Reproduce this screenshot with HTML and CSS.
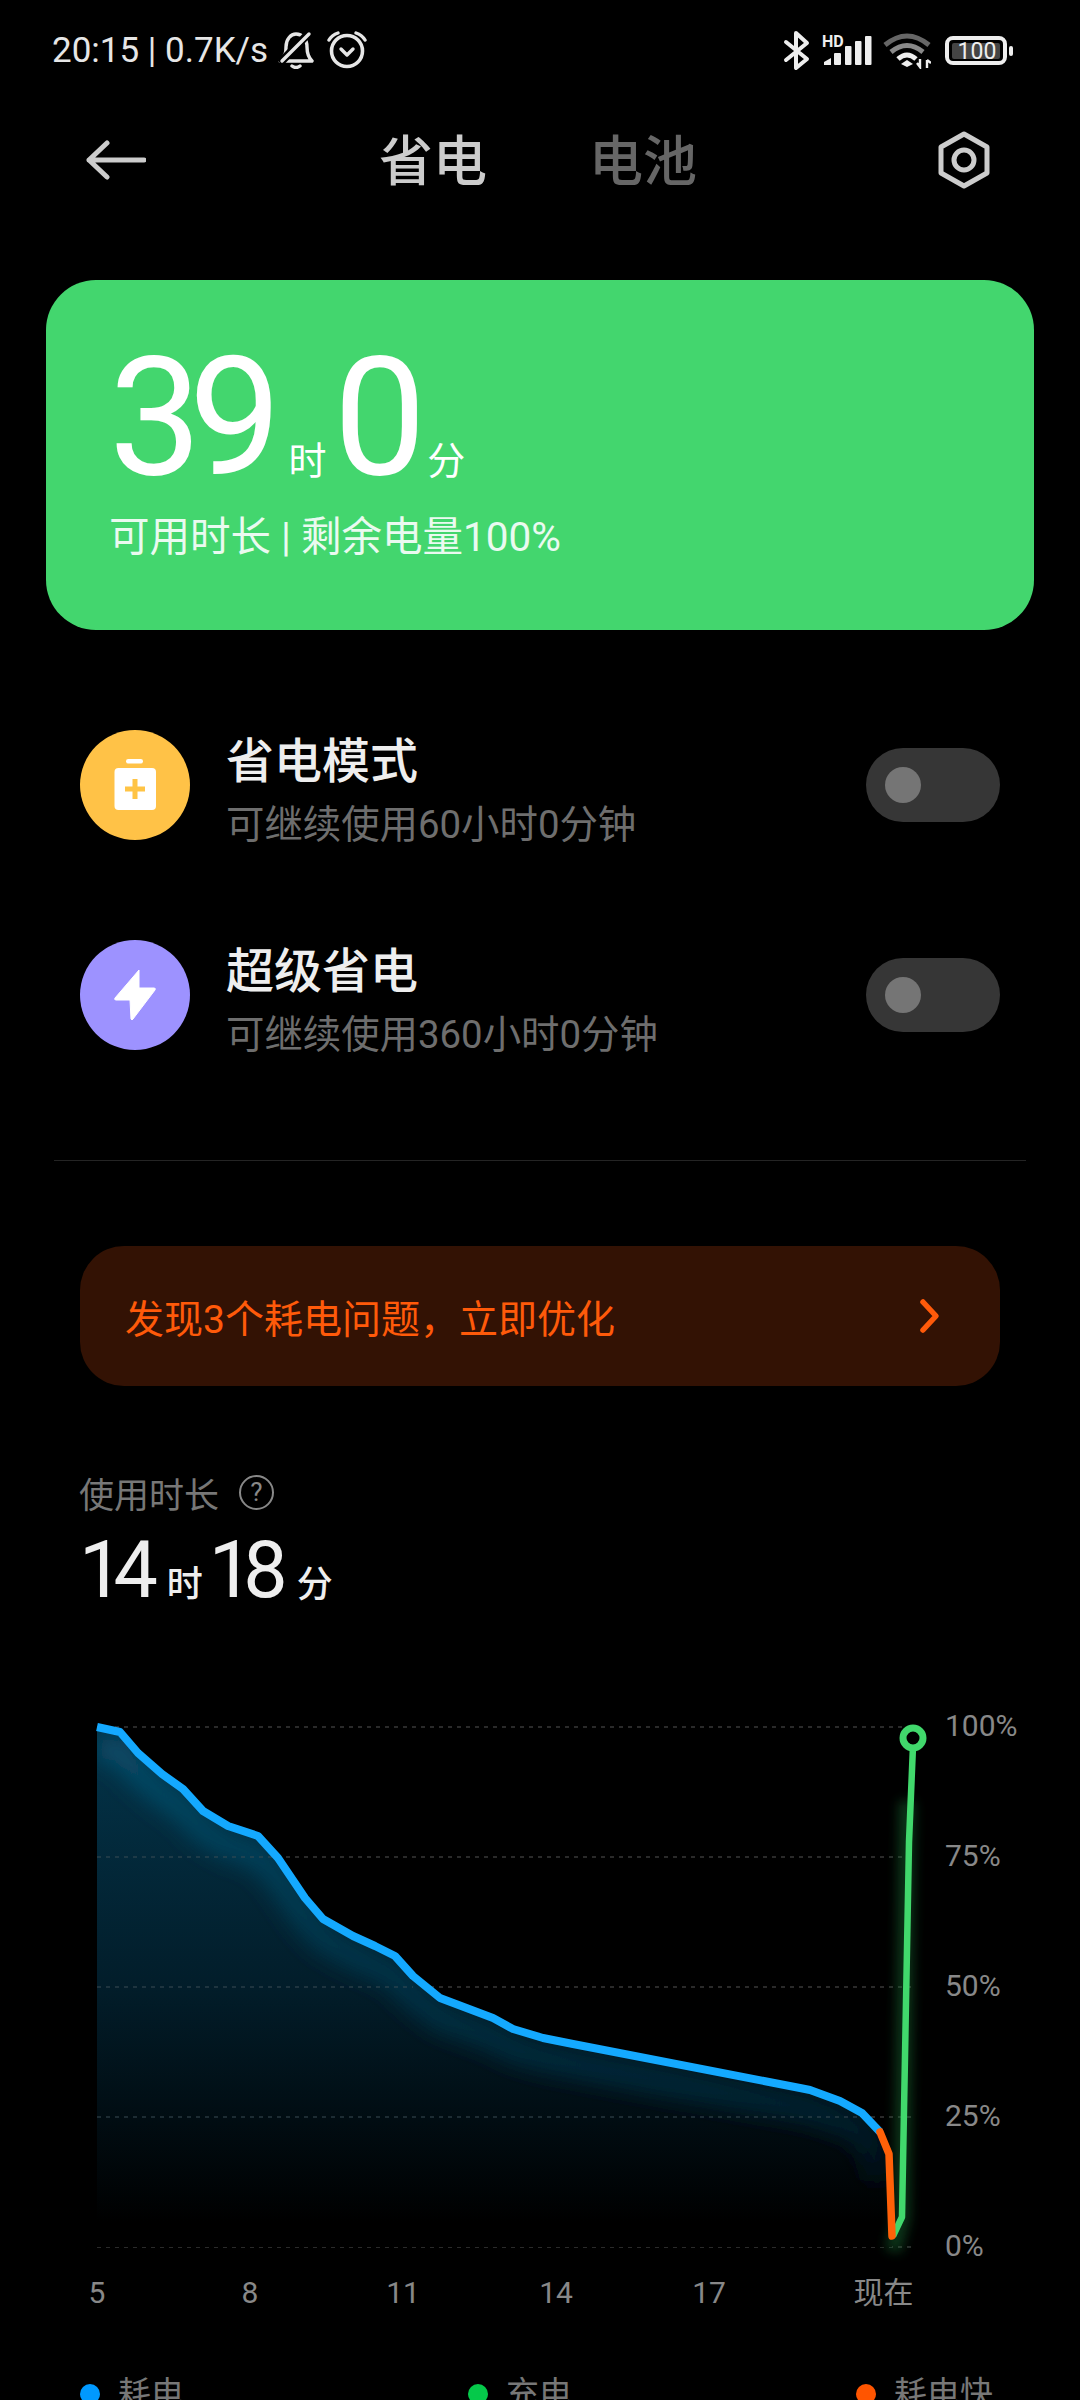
FILE: index.html
```html
<!DOCTYPE html>
<html lang="zh-CN">
<head>
    <meta charset="UTF-8">
    <title>省电与电池</title>
    <link rel="stylesheet" href="styles.css">
</head>
<body>
    <div class="status-bar">
        <div class="status-left">
            <span class="status-text">20:15 | 0.7K/s</span>
            <svg class="ic-bell" viewBox="277 30 36 38">
                <path d="M279 60 C285 55 285 50 285 46 C285 38 290 33 295 33 C301 33 306 38 306 46 C306 51 307 56 311 60 Z" fill="none" stroke="#e6e6e6" stroke-width="3.4" stroke-linejoin="round"/>
                <path d="M291 65 Q295 68 299 65" fill="none" stroke="#e6e6e6" stroke-width="3.4" stroke-linecap="round"/>
                <path d="M279 62 L309 31" stroke="#000" stroke-width="8"/>
                <path d="M281 60 L308 33" stroke="#e6e6e6" stroke-width="3.4" stroke-linecap="round"/>
            </svg>
            <svg class="ic-alarm" viewBox="325 30 40 38">
                <circle cx="345" cy="50" r="15.5" fill="none" stroke="#e6e6e6" stroke-width="3.6"/>
                <path d="M339 48 L345 54 L351 48" fill="none" stroke="#e6e6e6" stroke-width="3.4" stroke-linecap="round" stroke-linejoin="round"/>
                <path d="M327 39 Q330 34 336 32 M354 32 Q360 34 363 39" fill="none" stroke="#e6e6e6" stroke-width="3.4" stroke-linecap="round"/>
            </svg>
        </div>
        <div class="status-right">
            <svg class="ic-bt" viewBox="784 28 28 41">
                <path d="M787 40 L808 57 L797 66 V31 L808 41 L787 58" fill="none" stroke="#eee" stroke-width="4" stroke-linecap="round" stroke-linejoin="round"/>
            </svg>
            <svg class="ic-signal" viewBox="822 32 52 34">
                <text class="hd" x="823" y="46">HD</text>
                <path d="M825 64 V61 L832 57 V64 Z" fill="#eee"/>
                <rect x="835" y="52" width="7" height="12" rx="1" fill="#eee"/>
                <rect x="846" y="45" width="6.5" height="19" rx="1" fill="#eee"/>
                <rect x="856" y="40" width="6.5" height="24" rx="1" fill="#eee"/>
                <rect x="866" y="35" width="6.5" height="29" rx="1" fill="#eee"/>
            </svg>
            <svg class="ic-wifi" viewBox="884 30 48 38">
                <path d="M886 44 Q908 26 930 44" fill="none" stroke="#666" stroke-width="5"/>
                <path d="M892 51 Q908 38 924 51" fill="none" stroke="#888" stroke-width="5"/>
                <path d="M899 58 Q908 50 917 58" fill="none" stroke="#eee" stroke-width="5"/>
                <path d="M902 63 L908 59 L914 63 L908 66 Z" fill="#eee"/>
                <path d="M921 58 V66 M918 62 L921 66 L921 62 M928 67 V59 M928 59 L932 62" fill="none" stroke="#eee" stroke-width="2.4"/>
            </svg>
            <svg class="ic-batt" viewBox="945 32 71 33">
                <rect x="948" y="36" width="58" height="25" rx="6" fill="none" stroke="#eee" stroke-width="4"/>
                <rect x="953" y="41" width="48" height="16" rx="2" fill="#444"/>
                <text class="batt-num" x="978" y="57" text-anchor="middle">100</text>
                <rect x="1010" y="44" width="4" height="10" rx="2" fill="#eee"/>
            </svg>
        </div>
    </div>

    <div class="header">
        <svg class="ic-back" viewBox="86 140 62 40">
            <path d="M146 160 H91 M109 143 L91 160 L109 177" fill="none" stroke="#ccc" stroke-width="5" stroke-linecap="round" stroke-linejoin="round"/>
        </svg>
        <div class="tabs">
            <span class="tab active">省电</span>
            <span class="tab">电池</span>
        </div>
        <svg class="ic-gear" viewBox="936 130 56 60">
            <path d="M964 134 L987 147 V173 L964 186 L941 173 V147 Z" fill="none" stroke="#ccc" stroke-width="5" stroke-linejoin="round"/>
            <circle cx="964" cy="160" r="10" fill="none" stroke="#ccc" stroke-width="5"/>
        </svg>
    </div>

    <div class="card">
        <div class="hero">
            <span class="hero-num">39</span><span class="hero-unit">时</span><span class="hero-num">0</span><span class="hero-unit min">分</span>
        </div>
        <div class="hero-sub">可用时长 | 剩余电量100%</div>
    </div>

    <div class="modes">
        <div class="mode">
            <div class="mode-icon yellow">
                <svg viewBox="110 755 50 60" class="ic-mode">
                    <rect x="126" y="759" width="17" height="4.5" rx="2.2" fill="#fff"/>
                    <rect x="114.5" y="768" width="41.5" height="42" rx="4" fill="#fff"/>
                    <path d="M135 779 V799 M125 789 H145" stroke="#ffc445" stroke-width="5"/>
                </svg>
            </div>
            <div class="mode-text">
                <div class="mode-title">省电模式</div>
                <div class="mode-sub">可继续使用60小时0分钟</div>
            </div>
            <div class="toggle"><div class="knob"></div></div>
        </div>
        <div class="mode">
            <div class="mode-icon purple">
                <svg viewBox="110 965 50 60" class="ic-mode">
                    <path d="M139 970 L115 998 Q114 1000 116 1000 L130 1000 L131 1019 Q132 1021 133 1019 L155 990 Q156 988 154 988 L139 988 Z" fill="#fff" stroke="#fff" stroke-width="1" stroke-linejoin="round"/>
                </svg>
            </div>
            <div class="mode-text">
                <div class="mode-title">超级省电</div>
                <div class="mode-sub">可继续使用360小时0分钟</div>
            </div>
            <div class="toggle"><div class="knob"></div></div>
        </div>
    </div>

    <div class="divider"></div>

    <div class="banner">
        <span>发现3个耗电问题，立即优化</span>
        <svg class="ic-chev" viewBox="918 1298 24 38">
            <path d="M923 1303 L936 1317 L923 1331" fill="none" stroke="#ff5a0a" stroke-width="5.5" stroke-linecap="round" stroke-linejoin="round"/>
        </svg>
    </div>

    <div class="usage">
        <div class="usage-label">
            <span>使用时长</span>
            <span class="help">?</span>
        </div>
        <div class="usage-time">
            <span class="usage-num">14</span><span class="usage-unit">时</span><span class="usage-num">18</span><span class="usage-unit">分</span>
        </div>
    </div>

    <div class="chart">
        <div class="plot">
            <svg class="plot-svg" viewBox="90 1658 840 612">
                <defs>
                    <linearGradient id="areaFill" x1="0" y1="1726" x2="0" y2="2246" gradientUnits="userSpaceOnUse">
                        <stop offset="0" stop-color="#03344a"/>
                        <stop offset="0.5" stop-color="#021d2a"/>
                        <stop offset="0.95" stop-color="#000"/>
                    </linearGradient>
                    <linearGradient id="glowFade" x1="0" y1="1726" x2="0" y2="2246" gradientUnits="userSpaceOnUse">
                        <stop offset="0" stop-color="#07506e"/>
                        <stop offset="0.7" stop-color="#05293a"/>
                        <stop offset="1" stop-color="#000"/>
                    </linearGradient>
                    <clipPath id="areaClip">
                        <path d="M97 1726 L120 1731 L138 1752 L162 1773 L183 1788 L203 1810 L228 1825 L258 1835 L278 1857 L305 1897 L323 1918 L353 1935 L375 1945 L395 1955 L413 1975 L440 1997 L493 2017 L513 2028 L543 2037 L573 2043 L800 2087 L810 2089 L840 2100 L862 2112 L880 2131 L889 2153 L892 2235 L892 2246 L97 2246 Z"/>
                    </clipPath>
                    <filter id="blur12" x="-10%" y="-10%" width="120%" height="120%"><feGaussianBlur stdDeviation="11"/></filter>
                    <filter id="blur6" x="-400%" y="-10%" width="900%" height="120%"><feGaussianBlur stdDeviation="6"/></filter>
                </defs>

                <path class="grid" d="M97 1726 H913 M97 1856 H913 M97 1986 H913 M97 2116 H913 M97 2246 H913"/>

                <path d="M97 1726 L120 1731 L138 1752 L162 1773 L183 1788 L203 1810 L228 1825 L258 1835 L278 1857 L305 1897 L323 1918 L353 1935 L375 1945 L395 1955 L413 1975 L440 1997 L493 2017 L513 2028 L543 2037 L573 2043 L800 2087 L810 2089 L840 2100 L862 2112 L880 2131 L889 2153 L892 2235 L892 2246 L97 2246 Z" fill="url(#areaFill)"/>
                <g clip-path="url(#areaClip)">
                    <path d="M97 1746 L120 1751 L138 1772 L162 1793 L183 1808 L203 1830 L228 1845 L258 1855 L278 1877 L305 1917 L323 1938 L353 1955 L375 1965 L395 1975 L413 1995 L440 2017 L493 2037 L513 2048 L543 2057 L573 2063 L800 2107 L810 2109 L840 2120 L862 2132 L872 2150 L880 2180" fill="none" stroke="url(#glowFade)" stroke-width="24" filter="url(#blur12)"/>
                </g>
                <path class="grid over" d="M97 1856 H278 M97 1986 H413 M97 2116 H862"/>

                <path d="M907 1800 L902 2216 L893 2250" fill="none" stroke="#1a7a3a" stroke-width="16" filter="url(#blur6)" opacity="0.45"/>

                <path d="M97 1726 L120 1731 L138 1752 L162 1773 L183 1788 L203 1810 L228 1825 L258 1835 L278 1857 L305 1897 L323 1918 L353 1935 L375 1945 L395 1955 L413 1975 L440 1997 L493 2017 L513 2028 L543 2037 L573 2043 L800 2087 L810 2089 L840 2100 L862 2112 L880 2131" fill="none" stroke="#14a9ff" stroke-width="8" stroke-linejoin="round"/>
                <path d="M893 2235 L902 2216 L909 1841 L913 1745" fill="none" stroke="#41d86c" stroke-width="6.5" stroke-linejoin="round"/>
                <path d="M880 2131 L889 2153 L892 2235" fill="none" stroke="#ff6108" stroke-width="7.5" stroke-linecap="round" stroke-linejoin="round"/>
                <circle cx="913" cy="1737" r="10" fill="#000" stroke="#41d86c" stroke-width="7"/>
            </svg>
            <div class="x-labels">
                <span>5</span><span>8</span><span>11</span><span>14</span><span>17</span><span class="now">现在</span>
            </div>
        </div>
        <div class="y-labels">
            <span>100%</span><span>75%</span><span>50%</span><span>25%</span><span>0%</span>
        </div>
    </div>

    <div class="legend">
        <div class="legend-item"><i class="dot blue"></i>耗电</div>
        <div class="legend-item"><i class="dot green"></i>充电</div>
        <div class="legend-item"><i class="dot orange"></i>耗电快</div>
    </div>
</body>
</html>
```

FILE: styles.css
```css
html, body {
    margin: 0;
    padding: 0;
    height: 2400px;
    overflow: hidden;
    background: #000;
}
body {
    font-family: Roboto, "Noto Sans CJK SC", sans-serif;
    color: #eee;
}
svg {
    display: block;
}

/* status bar */
.status-bar {
    height: 100px;
    padding: 0 65px 0 52px;
    display: flex;
    justify-content: space-between;
    align-items: center;
}
.status-left, .status-right {
    display: flex;
    align-items: center;
}
.status-text {
    font-size: 35px;
    color: #e6e6e6;
}
.ic-bell { width: 36px; height: 38px; margin-left: 10px; }
.ic-alarm { width: 40px; height: 38px; margin-left: 13px; }
.ic-bt { width: 28px; height: 41px; }
.ic-signal { width: 52px; height: 34px; margin-left: 10px; }
.ic-wifi { width: 48px; height: 38px; margin-left: 10px; }
.ic-batt { width: 71px; height: 33px; margin-left: 13px; }
.hd {
    font-size: 16px;
    font-weight: 700;
    fill: #eee;
}
.batt-num {
    font-size: 23px;
    fill: #eee;
}

/* header */
.header {
    height: 120px;
    padding: 0 88px 0 84px;
    display: grid;
    grid-template-columns: 1fr auto 1fr;
    align-items: center;
}
.ic-back { width: 62px; height: 40px; }
.ic-gear { width: 56px; height: 60px; justify-self: end; }
.tabs {
    display: flex;
    gap: 102px;
    padding-top: 6px;
}
.tab {
    font-size: 54px;
    line-height: 60px;
    font-weight: 500;
    color: #666;
}
.tab.active {
    color: #ccc;
}

/* green card */
.card {
    margin: 60px 46px 0;
    height: 350px;
    box-sizing: border-box;
    padding: 58px 0 0 63px;
    background: #43d66e;
    border-radius: 50px;
    color: #fff;
}
.hero {
    display: flex;
    align-items: baseline;
    height: 160px;
}
.hero-num {
    font-size: 165px;
    line-height: 160px;
    letter-spacing: -13px;
}
.hero-unit {
    font-size: 38px;
    margin: 0 7px 0 20px;
}
.hero-unit.min {
    margin-left: 14px;
}
.hero-sub {
    margin-top: 14px;
    font-size: 40.5px;
    line-height: 50px;
    color: #eafaf0;
}

/* power saving modes */
.modes {
    margin: 100px 80px 0;
    display: flex;
    flex-direction: column;
    gap: 100px;
}
.mode {
    height: 110px;
    display: flex;
    align-items: center;
}
.mode-icon {
    width: 110px;
    height: 110px;
    border-radius: 50%;
    display: flex;
    justify-content: center;
    align-items: center;
}
.mode-icon.yellow { background: #ffc247; }
.mode-icon.purple { background: #9d92ff; }
.ic-mode { width: 50px; height: 60px; }
.mode-text {
    flex: 1;
    margin-left: 36px;
    padding-top: 12px;
}
.mode-title {
    font-size: 48px;
    line-height: 60px;
    font-weight: 500;
    color: #eee;
}
.mode-sub {
    font-size: 38.4px;
    line-height: 50px;
    margin-top: 8px;
    color: #6e6e6e;
}
.toggle {
    width: 134px;
    height: 74px;
    box-sizing: border-box;
    padding: 19px;
    border-radius: 37px;
    background: #363636;
}
.knob {
    width: 36px;
    height: 36px;
    border-radius: 50%;
    background: #757575;
}

.divider {
    height: 1px;
    margin: 110px 54px 0;
    background: #242424;
}

/* warning banner */
.banner {
    margin: 85px 80px 0;
    height: 140px;
    box-sizing: border-box;
    padding: 0 58px 0 45px;
    display: flex;
    justify-content: space-between;
    align-items: center;
    background: #331204;
    border-radius: 44px;
    font-size: 39px;
    color: #ff5a0a;
}
.ic-chev { width: 24px; height: 38px; }

/* usage */
.usage {
    margin: 84px 0 0 79px;
}
.usage-label {
    display: flex;
    align-items: center;
    gap: 20px;
    height: 44px;
    font-size: 35px;
    color: #777;
}
.help {
    width: 31px;
    height: 31px;
    border: 2px solid #888;
    border-radius: 50%;
    display: flex;
    justify-content: center;
    align-items: center;
    font-size: 26px;
    color: #888;
}
.usage-time {
    display: flex;
    align-items: baseline;
    margin-top: 18px;
    color: #eee;
}
.usage-num {
    font-size: 79px;
    line-height: 76px;
    letter-spacing: -10px;
}
.usage-unit {
    font-size: 36px;
    font-weight: 500;
    margin: 0 6px 0 19px;
}

/* chart */
.chart {
    display: flex;
    margin-top: 51px;
}
.plot {
    margin-left: 20px;
    width: 925px;
}
.plot-svg {
    width: 840px;
    height: 612px;
    margin-left: 70px;
}
.grid {
    fill: none;
    stroke: #555;
    stroke-width: 1.2;
    stroke-dasharray: 4 5;
}
.grid.over {
    stroke: #3b4d55;
}
.x-labels {
    display: grid;
    grid-template-columns: repeat(6, 153px);
    height: 44px;
    margin-left: 0.5px;
    font-size: 30px;
    line-height: 44px;
    color: #888;
    text-align: center;
}
.x-labels .now {
    text-align: right;
    padding-right: 25px;
}
.y-labels {
    display: flex;
    flex-direction: column;
    padding-top: 2px;
    font-size: 30px;
    color: #888;
}
.y-labels span {
    height: 130px;
    line-height: 130px;
}

/* legend */
.legend {
    display: grid;
    grid-template-columns: 388px 388px 1fr;
    margin: 62px 0 0 80px;
    font-size: 33px;
    line-height: 34px;
    color: #777;
}
.legend-item {
    display: flex;
    align-items: center;
    gap: 18px;
}
.dot {
    width: 20px;
    height: 20px;
    border-radius: 50%;
}
.dot.blue { background: #0099ff; }
.dot.green { background: #05c94a; }
.dot.orange { background: #ff5500; }
```
